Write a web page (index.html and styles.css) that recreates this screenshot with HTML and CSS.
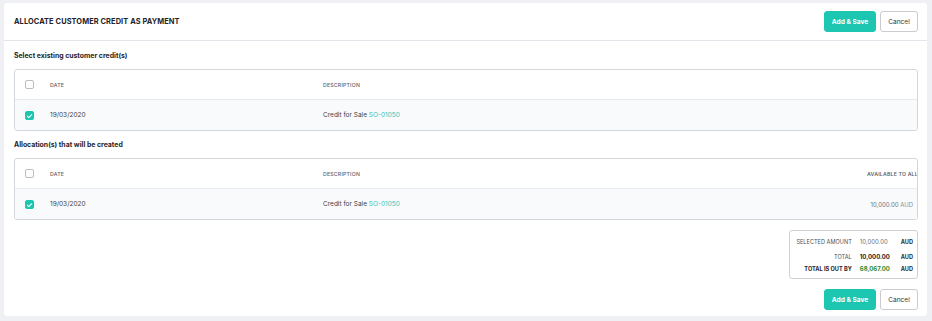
FILE: index.html
```html
<!DOCTYPE html>
<html>
<head>
  <meta charset="UTF-8">
  <title>Allocate Customer Credit</title>
  <link rel="stylesheet" href="styles.css">
</head>
<body>
  <div class="panel">
    <div class="panel-header">
      <h2>ALLOCATE CUSTOMER CREDIT AS PAYMENT</h2>
      <div class="button-group">
        <button class="btn btn-primary">Add &amp; Save</button>
        <button class="btn btn-default">Cancel</button>
      </div>
    </div>

    <div class="panel-body">
      <div class="section-label">Select existing customer credit(s)</div>
      <div class="grid-table">
        <div class="grid-row head">
          <div class="cell"><span class="check"></span></div>
          <div class="cell">DATE</div>
          <div class="cell">DESCRIPTION</div>
        </div>
        <div class="grid-row data">
          <div class="cell"><span class="check checked"></span></div>
          <div class="cell">19/03/2020</div>
          <div class="cell">Credit for Sale <a href="#">SO-01050</a></div>
        </div>
      </div>

      <div class="section-label second">Allocation(s) that will be created</div>
      <div class="grid-table wide">
        <div class="grid-row head">
          <div class="cell"><span class="check"></span></div>
          <div class="cell">DATE</div>
          <div class="cell">DESCRIPTION</div>
          <div class="cell overflow">AVAILABLE TO ALLOCATE</div>
        </div>
        <div class="grid-row data">
          <div class="cell"><span class="check checked"></span></div>
          <div class="cell">19/03/2020</div>
          <div class="cell">Credit for Sale <a href="#">SO-01050</a></div>
          <div class="cell amount">10,000.00 <span class="muted">AUD</span></div>
        </div>
      </div>

      <div class="summary-wrap">
        <div class="summary">
          <div class="s-label top">SELECTED AMOUNT</div>
          <div class="s-value top">10,000.00</div>
          <div class="s-cur top">AUD</div>
          <div class="s-label">TOTAL</div>
          <div class="s-value strong">10,000.00</div>
          <div class="s-cur">AUD</div>
          <div class="s-label strong">TOTAL IS OUT BY</div>
          <div class="s-value strong green">68,067.00</div>
          <div class="s-cur">AUD</div>
        </div>
      </div>

      <div class="footer-buttons">
        <button class="btn btn-primary">Add &amp; Save</button>
        <button class="btn btn-default">Cancel</button>
      </div>
    </div>
  </div>
</body>
</html>
```

FILE: styles.css
```css
body {
  margin: 0;
  padding: 3px 5px 5px 4px;
  background-color: #eef0f3;
  font-family: "Inter", "Noto Sans", sans-serif;
  color: #2b2f33;
}
.panel {
  background-color: #ffffff;
  border-radius: 3px;
  height: 313px;
}
.panel-header {
  display: flex;
  align-items: center;
  justify-content: space-between;
  height: 37px;
  padding: 0 9px 0 10px;
  border-bottom: 1px solid #e2e5e9;
}
.panel-header h2 {
  margin: 0;
  font-size: 7.4px;
  font-weight: 700;
  letter-spacing: 0.1px;
  color: #1f2328;
}
.button-group,
.footer-buttons {
  display: flex;
  gap: 4px;
}
.footer-buttons {
  justify-content: flex-end;
  margin-top: 10px;
}
.btn {
  height: 21px;
  padding: 0;
  border-radius: 3px;
  font-family: inherit;
  font-size: 6.6px;
  white-space: nowrap;
  cursor: pointer;
}
.btn-primary {
  background-color: #1cc6b0;
  border: 1px solid #1cc6b0;
  color: #ffffff;
  font-weight: 700;
  width: 52px;
}
.btn-default {
  background-color: #ffffff;
  border: 1px solid #c8ccd1;
  color: #33373b;
  width: 38px;
}
.panel-body {
  padding: 0 9px 0 10px;
}
.section-label {
  height: 27px;
  display: flex;
  align-items: center;
  font-size: 6.9px;
  font-weight: 700;
  color: #1f2328;
  padding-top: 1px;
}
.section-label.second {
  height: 27px;
  padding-top: 0;
}
.grid-table {
  border: 1px solid #d3d7dc;
  border-radius: 3px;
  overflow: hidden;
}
.grid-row {
  display: grid;
  grid-template-columns: 35px 273px 1fr;
  align-items: center;
}
.grid-table.wide .grid-row {
  grid-template-columns: 35px 273px 1fr 50px;
}
.grid-row.head {
  height: 29px;
  font-size: 5.2px;
  font-weight: 500;
  color: #5d636a;
  letter-spacing: 0.2px;
}
.grid-row.data {
  height: 30px;
  border-top: 1px solid #e7eaee;
  background-color: #f9fafc;
  font-size: 6.5px;
  color: #3a3f45;
}
.cell {
  white-space: nowrap;
}
.cell:first-child {
  padding-left: 10px;
  display: flex;
  align-items: center;
}
.cell.overflow {
  font-weight: 600;
}
.cell.amount {
  text-align: right;
  padding-right: 4px;
  font-size: 6px;
  color: #6b7178;
}
.cell a {
  color: #35c4b5;
  text-decoration: none;
}
.muted {
  color: #8a9097;
}
.check {
  display: inline-block;
  box-sizing: border-box;
  width: 9px;
  height: 9px;
  border: 1px solid #b9bec4;
  border-radius: 2px;
  background-color: #ffffff;
  position: relative;
}
.check.checked {
  background-color: #1cc6b0;
  border-color: #1cc6b0;
}
.check.checked::after {
  content: "";
  position: absolute;
  left: 2px;
  top: 1px;
  width: 2px;
  height: 4px;
  border: solid #ffffff;
  border-width: 0 1px 1px 0;
  transform: rotate(45deg);
}
.summary-wrap {
  display: flex;
  justify-content: flex-end;
  margin-top: 10px;
}
.summary {
  display: grid;
  grid-template-columns: auto auto auto;
  column-gap: 8px;
  row-gap: 5px;
  align-items: center;
  width: 129px;
  box-sizing: border-box;
  padding: 7px 4px 6px 5px;
  border: 1px solid #cdd1d6;
  border-radius: 3px;
  font-size: 5.6px;
}
.summary .top {
  padding-bottom: 3px;
}
.s-label {
  text-align: right;
  color: #4a5057;
}
.s-label.strong {
  color: #1f2328;
}
.s-value {
  color: #6b7178;
  font-size: 6px;
}
.s-value.strong {
  color: #1f2328;
  font-weight: 700;
}
.s-value.green {
  color: #2e8b2e;
}
.s-cur {
  text-align: right;
  font-weight: 700;
  color: #2b2f33;
}
.strong {
  font-weight: 700;
}
```
